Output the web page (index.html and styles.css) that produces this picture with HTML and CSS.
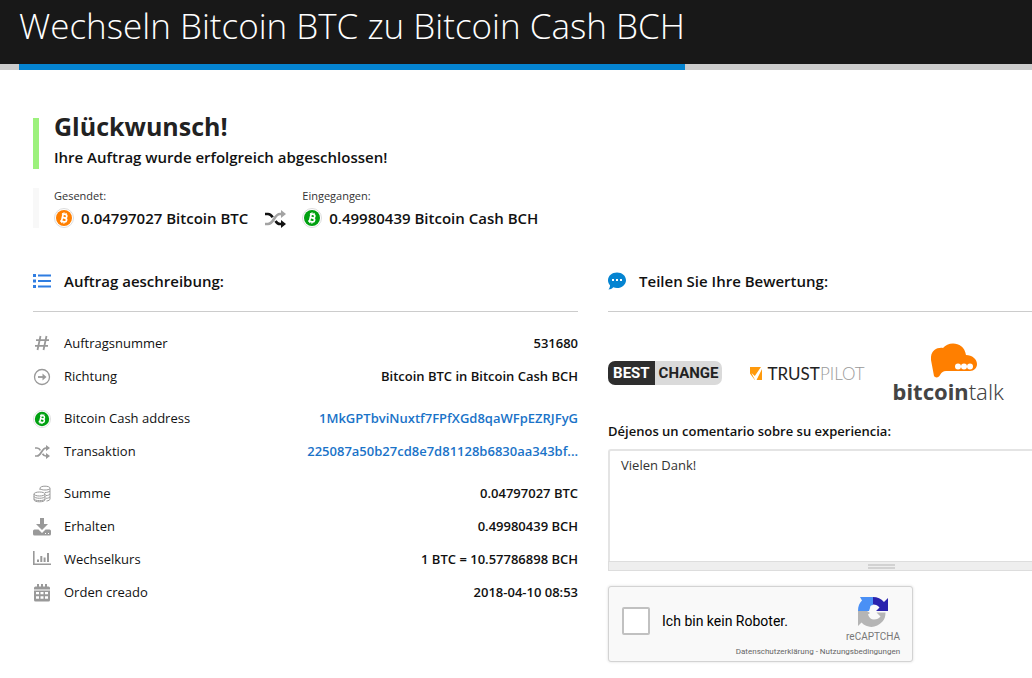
FILE: index.html
```html
<!DOCTYPE html>
<html lang="de">
<head>
    <meta charset="UTF-8">
    <meta name="viewport" content="width=device-width, initial-scale=1.0">
    <title>Wechseln Bitcoin BTC zu Bitcoin Cash BCH</title>
    <link rel="stylesheet" href="styles.css">
</head>
<body>
    <!-- Shared icons -->
    <svg class="sprite" aria-hidden="true">
        <symbol id="coin" viewBox="0 0 20 20">
            <circle cx="10" cy="10" r="9.5" fill="#fff" stroke="#dcdcdc"/>
            <circle cx="10" cy="10" r="8" fill="currentColor"/>
            <g fill="none" stroke="#fff" stroke-width="1.7" transform="rotate(13 10 10)">
                <path d="M7 6.3h3.6a1.75 1.75 0 0 1 0 3.5H8.3h2.8a1.9 1.9 0 0 1 0 3.8H7M8.3 6.3v7.3"/>
                <path d="M8.9 4.5v2M11 4.5v2M8.9 13.5v2M11 13.5v2" stroke-width="1.2"/>
            </g>
        </symbol>
        <symbol id="shuffle" viewBox="0 0 22 18">
            <path d="M1 14h3c6 0 6-10 12-10h2" fill="none" stroke="#a3a3a3" stroke-width="2.6"/>
            <path d="M17 0l5 4-5 4z" fill="#a3a3a3"/>
            <path d="M1 4h3c2.3 0 3.6 1.5 4.7 3.3M11.5 11c1.1 1.8 2.5 3 4.5 3h2" fill="none" stroke="currentColor" stroke-width="2.6"/>
            <path d="M17 10l5 4-5 4z" fill="currentColor"/>
        </symbol>
    </svg>

    <header class="header">
        <h1 class="header-title">Wechseln Bitcoin BTC zu Bitcoin Cash BCH</h1>
    </header>

    <main class="content">
        <section class="notice">
            <h2 class="notice-title">Glückwunsch!</h2>
            <p class="notice-text">Ihre Auftrag wurde erfolgreich abgeschlossen!</p>
        </section>

        <section class="exchange">
            <div>
                <div class="exchange-label">Gesendet:</div>
                <div class="exchange-value">
                    <svg class="coin coin-btc"><use href="#coin"/></svg>
                    0.04797027 Bitcoin BTC
                </div>
            </div>
            <svg class="exchange-arrows"><use href="#shuffle"/></svg>
            <div>
                <div class="exchange-label">Eingegangen:</div>
                <div class="exchange-value">
                    <svg class="coin coin-bch"><use href="#coin"/></svg>
                    0.49980439 Bitcoin Cash BCH
                </div>
            </div>
        </section>

        <div class="columns">
            <section class="order">
                <h3 class="section-title">
                    <svg class="icon-list" viewBox="0 0 18 16" fill="#2f7de1">
                        <path d="M0 1h3v3H0zM0 6.5h3v3H0zM0 12h3v3H0zM5 1.5h13v2H5zM5 7h13v2H5zM5 12.5h13v2H5z"/>
                    </svg>
                    Auftrag aeschreibung:
                </h3>
                <dl class="details">
                    <div class="row">
                        <dt>
                            <svg class="icon" viewBox="0 0 18 18" fill="none" stroke="currentColor" stroke-width="1.8">
                                <path d="M7.5 1L4.500 15M13.5 1l-3 14M3 5.200h13M2 10.800h13"/>
                            </svg>
                            Auftragsnummer
                        </dt>
                        <dd>531680</dd>
                    </div>
                    <div class="row">
                        <dt>
                            <svg class="icon" viewBox="0 0 18 18" fill="none" stroke="currentColor">
                                <circle cx="9" cy="9" r="7.5" stroke-width="1.3"/>
                                <path d="M5 9h6" stroke-width="1.8"/>
                                <path d="M9.5 5.5L13.5 9l-4 3.5z" fill="currentColor" stroke="none"/>
                            </svg>
                            Richtung
                        </dt>
                        <dd>Bitcoin BTC in Bitcoin Cash BCH</dd>
                    </div>
                    <div class="row row-group">
                        <dt>
                            <svg class="icon coin-bch"><use href="#coin"/></svg>
                            Bitcoin Cash address
                        </dt>
                        <dd><a href="#">1MkGPTbviNuxtf7FPfXGd8qaWFpEZRJFyG</a></dd>
                    </div>
                    <div class="row">
                        <dt>
                            <svg class="icon" viewBox="0 0 18 18" fill="none" stroke="currentColor" stroke-width="1.7">
                                <path d="M2 13h2c4.500 0 4.500-8 9-8h1M2 5h2c1.800 0 2.700 1 3.400 2.300M9.500 10.700C10.300 12 11.300 13 13 13h1"/>
                                <path d="M13 2l4 3-4 3zM13 10l4 3-4 3z" fill="currentColor" stroke="none"/>
                            </svg>
                            Transaktion
                        </dt>
                        <dd><a href="#">225087a50b27cd8e7d81128b6830aa343bf...</a></dd>
                    </div>
                    <div class="row row-group">
                        <dt>
                            <svg class="icon" viewBox="0 0 18 18" fill="none" stroke="currentColor">
                                <ellipse cx="6.5" cy="9" rx="5.5" ry="2"/>
                                <path d="M1 9v2.300c0 2.600 11 2.600 11 0V9M1 11.300v2.400c0 2.600 11 2.600 11 0v-2.400M1 13.700v1c0 2.800 11 2.800 11 0v-1"/>
                                <path d="M7 5V3.200C7 .5 17 .5 17 3.200V14c0 1-1.500 1.800-3.500 2M7 3.500c1 2 9 2 10 0M12 7.500c2 0 4-.5 5-1.500M13 10.500c2 0 3-.5 4-1.500M13 13.300c2 0 3-.5 4-1.500"/>
                            </svg>
                            Summe
                        </dt>
                        <dd>0.04797027 BTC</dd>
                    </div>
                    <div class="row">
                        <dt>
                            <svg class="icon" viewBox="0 0 18 18" fill="currentColor">
                                <path d="M7 0h4v6h4l-6 6-6-6h4z"/>
                                <path fill-rule="evenodd" d="M1.5 11.5h4L9 15l3.500-3.500h4q1.500 0 1.500 1.500v3q0 1.500-1.500 1.500h-15Q0 17.500 0 16v-3q0-1.500 1.500-1.500zM12 15v1h1v-1zM15 15v1h1v-1z"/>
                            </svg>
                            Erhalten
                        </dt>
                        <dd>0.49980439 BCH</dd>
                    </div>
                    <div class="row">
                        <dt>
                            <svg class="icon" viewBox="0 0 18 18" fill="currentColor">
                                <path d="M0 0h1.600v12.400H18V14H0zM4 8.500h2V11H4zM7.300 5h2v6h-2zM10.600 6.500h2V11h-2zM14 2h2v9h-2z"/>
                            </svg>
                            Wechselkurs
                        </dt>
                        <dd>1 BTC = 10.57786898 BCH</dd>
                    </div>
                    <div class="row">
                        <dt>
                            <svg class="icon" viewBox="0 0 18 18" fill="currentColor">
                                <path fill-rule="evenodd" d="M1 4q0-1.500 1.500-1.500H4V0h2v2.500h2V0h2v2.500h2V0h2v2.500h1.500Q17 2.500 17 4v1.500H1zM1 6.500h16v9.500q0 1.500-1.500 1.500h-13Q1 17.500 1 16zM3 8v2.300h3V8zM7.500 8v2.300h3V8zM12 8v2.300h3V8zM3 12.200v2.600h3v-2.600zM7.500 12.200v2.600h3v-2.600zM12 12.200v2.600h3v-2.600z"/>
                            </svg>
                            Orden creado
                        </dt>
                        <dd>2018-04-10 08:53</dd>
                    </div>
                </dl>
            </section>

            <section class="review">
                <h3 class="section-title">
                    <svg class="icon-list" viewBox="0 0 18 18">
                        <path d="M9 .5c5 0 9 3.400 9 7.700s-4 7.800-9 7.800c-1.300 0-2.600-.2-3.700-.7C4 16.700 2.200 17.500.5 17.500c1-1.200 1.600-2.700 1.500-4.200C.8 11.900 0 10.100 0 8.200 0 3.900 4 .5 9 .5z" fill="#0584d1"/>
                        <path d="M4 7h2v2H4zM8 7h2v2H8zM12 7h2v2h-2z" fill="#fff"/>
                    </svg>
                    Teilen Sie Ihre Bewertung:
                </h3>
                <div class="logos">
                    <a href="#" class="bestchange"><span class="bestchange-dark">BEST</span><span class="bestchange-light">CHANGE</span></a>
                    <a href="#" class="trustpilot">
                        <svg class="trustpilot-mark" viewBox="0 0 12 13">
                            <path d="M0 0h12v13H0z" fill="#ff9a0c"/>
                            <path d="M0 6.5L4.800 13H0zM12 0v2L6.500 13H5L1.500 6l3.300 3L11 0z" fill="#fff"/>
                        </svg>
                        <span>TRUST<span class="trustpilot-pale">PILOT</span></span>
                    </a>
                    <a href="#" class="bitcointalk">
                        <svg class="bitcointalk-cloud" viewBox="0 0 46 35">
                            <path d="M3 33L0 17C-1 9 5 4 12 5c5-7 21-7 23 7 6 0 11 4 11 9 0 4-3 7-7 7H15c-3 0-4 1-6 4-1 3-5 3-6 1z" fill="#ff7f00"/>
                            <g fill="#fff"><circle cx="27" cy="23.5" r="3"/><circle cx="33" cy="23.5" r="3"/><circle cx="39" cy="23.5" r="3"/></g>
                        </svg>
                        <span><b>bitcoin</b>talk</span>
                    </a>
                </div>
                <label class="comment-label" for="comment">Déjenos un comentario sobre su experiencia:</label>
                <textarea class="comment" id="comment" name="comment">Vielen Dank!</textarea>
                <div class="grip-bar"><span class="grip"></span></div>

                <div class="captcha">
                    <label class="captcha-check">
                        <input type="checkbox" name="robot">
                        Ich bin kein Roboter.
                    </label>
                    <div class="captcha-brand">
                        <svg class="captcha-logo" viewBox="0 0 32 32">
                            <path d="M16 1v8c-2 0-3 1-3 3l-1 3H1C1 10 2.500 7 5 4.500L3 1z" fill="#4a90f5"/>
                            <path d="M16 1c4.500 0 8 1.500 11 5l4-4v13H19l3.500-3.500C21 9.500 19 8.500 16 8.500z" fill="#2a22ad"/>
                            <path d="M1 15h9l3 2-2 1.500c1 3 3 5 6 5 3 0 5-1 6.500-3l-4-4h9c0 4-1 7-3 9-6 7-15.500 7-21 1L1 30z" fill="#b5b5b5"/>
                        </svg>
                        reCAPTCHA
                    </div>
                    <div class="captcha-links">
                        <a href="#">Datenschutzerklärung</a> - <a href="#">Nutzungsbedingungen</a>
                    </div>
                </div>
            </section>
        </div>
    </main>
</body>
</html>
```
FILE: styles.css
```css
* {
    box-sizing: border-box;
}
body {
    margin: 0;
    font-family: "Open Sans", "Noto Sans", sans-serif;
    font-size: 13px;
    color: #111;
    background: #fff;
}
h1, h2, h3, p, dl, dd {
    margin: 0;
}
a {
    color: #1a73c8;
    text-decoration: none;
}
svg {
    flex: none;
}
.sprite {
    display: none;
}

/* Header */
.header {
    display: flex;
    padding-left: 19px;
    background: #181818;
    border-bottom: 6px solid #ccc;
}
.header-title {
    margin-bottom: -6px;
    padding-bottom: 12px;
    border-bottom: 6px solid #0584d1;
    font-size: 35px;
    line-height: 52px;
    font-weight: 300;
    white-space: nowrap;
    color: #fff;
}

.content {
    padding: 41px 0 16px 33px;
}

/* Result */
.notice {
    display: flow-root;
    margin-top: 7px;
    padding-left: 15px;
    border-left: 6px solid #9cf17c;
}
.notice-title {
    margin-top: -7px;
    font-size: 25px;
    line-height: 30px;
    color: #222;
}
.notice-text {
    padding-top: 4px;
    font-size: 15px;
    line-height: 24px;
    font-weight: 600;
}
.exchange {
    display: flex;
    gap: 16px;
    margin-top: 19px;
    padding-left: 15px;
    border-left: 6px solid #f8f8f8;
}
.exchange-label {
    font-size: 11px;
    line-height: 16px;
    color: #333;
}
.exchange-value {
    display: flex;
    align-items: center;
    gap: 7px;
    padding-top: 4px;
    font-size: 15px;
    line-height: 20px;
    font-weight: 600;
}
.exchange-arrows {
    align-self: flex-end;
    width: 22px;
    height: 18px;
}
.coin {
    width: 20px;
    height: 20px;
}
.coin-btc {
    color: #ff7f00;
}
.row .coin-bch,
.coin-bch {
    color: #00a010;
}

/* Columns */
.columns {
    display: grid;
    grid-template-columns: 9fr 7fr;
    gap: 30px;
    margin-top: 39px;
}
.section-title {
    display: flex;
    align-items: center;
    gap: 13px;
    padding-bottom: 16px;
    border-bottom: 1px solid #ccc;
    font-size: 15px;
    line-height: 28px;
    font-weight: 600;
}
.icon-list {
    width: 18px;
    height: 18px;
}
.details {
    padding-top: 15px;
}
.row {
    display: flex;
    justify-content: space-between;
    line-height: 33px;
}
.row-group {
    margin-top: 9px;
}
.row dt {
    display: flex;
    align-items: center;
    gap: 13px;
}
.row dd {
    font-weight: 600;
}
.icon {
    width: 18px;
    height: 18px;
    color: #999;
}

/* Review */
.logos {
    display: flex;
    align-items: center;
    gap: 28px;
    height: 110px;
    padding-top: 12px;
}
.bestchange {
    display: flex;
    border-radius: 7px;
    overflow: hidden;
    font-family: Roboto, sans-serif;
    font-size: 15px;
    line-height: 24px;
    font-weight: 700;
}
.bestchange-dark {
    padding: 0 5px;
    background: #2e2e2e;
    color: #fff;
}
.bestchange-light {
    padding: 0 4px;
    background: #dadada;
    color: #222;
}
.trustpilot {
    display: flex;
    align-items: center;
    gap: 5px;
    font-family: Lato, sans-serif;
    font-size: 17px;
    color: #222;
}
.trustpilot-mark {
    width: 12px;
    height: 13px;
}
.trustpilot-pale {
    color: #999;
    font-weight: 300;
}
.bitcointalk {
    display: flex;
    flex-direction: column;
    align-items: center;
    font-family: "Noto Sans", sans-serif;
    font-size: 22px;
    line-height: 26px;
    font-weight: 300;
    color: #444;
}
.bitcointalk b {
    font-weight: 700;
}
.bitcointalk-cloud {
    width: 46px;
    height: 35px;
    margin-left: 12px;
}
.comment-label {
    display: block;
    font-size: 13px;
    line-height: 18px;
    font-weight: 600;
}
.comment {
    display: block;
    width: 100%;
    height: 112px;
    margin-top: 9px;
    padding: 5px 11px;
    border: 2px solid #e4e4e4;
    border-right: 0;
    border-bottom: 0;
    border-radius: 3px 0 0 0;
    font: inherit;
    line-height: 18px;
    color: #333;
    resize: none;
}
.grip-bar {
    padding: 2px 0 1px 61%;
    border: 1px solid #ddd;
    border-right: 0;
    background: #eee;
}
.grip {
    display: block;
    width: 27px;
    height: 5px;
    border: 2px solid #d2d2d2;
    border-width: 2px 0;
}

/* Captcha */
.captcha {
    display: grid;
    grid-template-columns: 1fr auto;
    align-items: center;
    width: 305px;
    margin-top: 15px;
    padding: 9px 12px 2px 13px;
    border: 1px solid #d3d3d3;
    border-radius: 3px;
    background: #f9f9f9;
    box-shadow: 0 0 3px #ddd;
    font-family: Roboto, sans-serif;
}
.captcha-check {
    display: flex;
    align-items: center;
    gap: 12px;
    font-size: 14px;
    color: #000;
}
.captcha-check input {
    appearance: none;
    width: 28px;
    height: 28px;
    margin: 0;
    border: 2px solid #c1c1c1;
    border-radius: 2px;
    background: #fff;
}
.captcha-brand {
    display: flex;
    flex-direction: column;
    align-items: center;
    font-size: 10px;
    line-height: 16px;
    color: #777;
}
.captcha-logo {
    width: 32px;
    height: 32px;
    margin-bottom: 1px;
}
.captcha-links {
    grid-column: 1 / 3;
    text-align: right;
    font-size: 8px;
    line-height: 14px;
    color: #666;
}
.captcha-links a {
    color: inherit;
}
```
